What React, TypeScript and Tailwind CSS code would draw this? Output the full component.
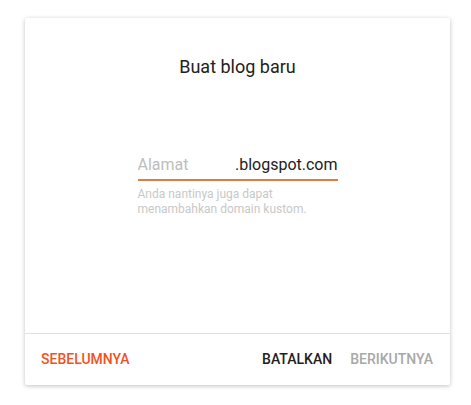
import { useState } from "react";

export default function App() {
  const [address, setAddress] = useState("");

  return (
    <div className="min-h-[405px] w-full bg-white pl-[25px] pt-[18px] font-['Roboto',sans-serif]">
      <div className="flex h-[367px] w-[425px] flex-col rounded-[2px] bg-white shadow-[0_1px_4px_rgba(0,0,0,0.25)]">
        <div className="flex flex-1 flex-col items-center">
          <h1 className="pt-[35px] text-[18px] leading-7 font-normal text-[#212121]">Buat blog baru</h1>

          <div className="mt-[72px] w-[200px]">
            <div className="flex items-center pb-[2px]">
              <input
                value={address}
                onChange={(e) => setAddress(e.target.value)}
                placeholder="Alamat"
                className="h-6 min-w-0 flex-1 bg-transparent text-[16px] leading-6 text-[#212121] outline-none placeholder:text-[#bdbdbd]"
              />
              <span className="text-[16px] leading-6 text-[#212121]">.blogspot.com</span>
            </div>
            <div className="h-[1.5px] bg-[#dc7d45]" />
            <p className="mt-[6px] text-[12px] leading-[15px] text-[#c8c8c8]">
              Anda nantinya juga dapat menambahkan domain kustom.
            </p>
          </div>
        </div>

        <div className="flex h-[52px] items-center border-t border-[#e0e0e0] pl-4 pr-[17px]">
          <button className="text-[14px] font-medium text-[#f4511e]">SEBELUMNYA</button>
          <div className="ml-auto flex items-center gap-[18px]">
            <button className="text-[14px] font-medium text-[#212121]">BATALKAN</button>
            <button className="text-[14px] font-medium text-[#a8a8a8]">BERIKUTNYA</button>
          </div>
        </div>
      </div>
    </div>
  );
}
